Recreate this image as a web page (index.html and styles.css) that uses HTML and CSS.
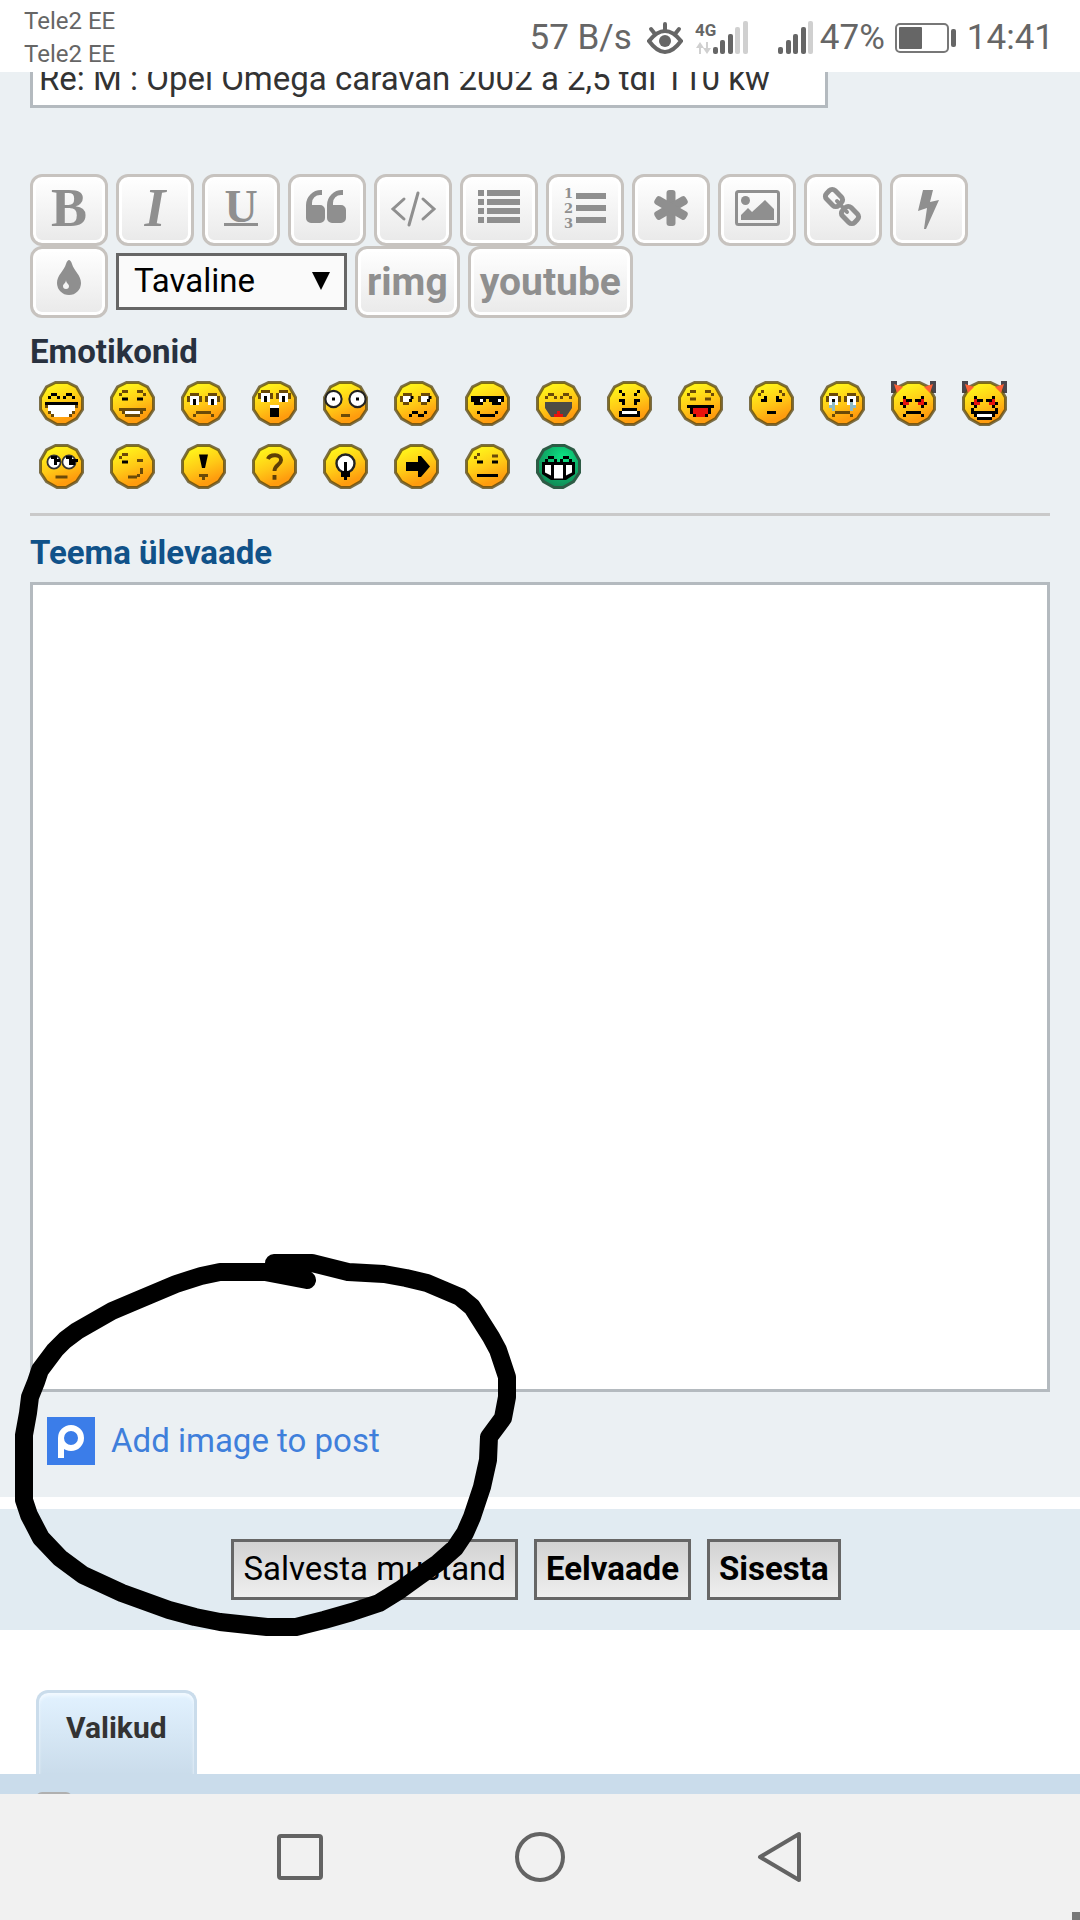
FILE: index.html
```
<!DOCTYPE html>
<html lang="et">
<head>
<meta charset="utf-8">
<meta name="viewport" content="width=device-width,initial-scale=1">
<title>Postita vastus</title>
<link rel="stylesheet" href="styles.css">
</head>
<body>

<!-- shared smiley parts, 15x15 grid -->
<svg class="defs" width="0" height="0" aria-hidden="true">
  <defs>
    <linearGradient id="gold" x1="0.3" y1="0" x2="0.7" y2="1"><stop offset="0.1" stop-color="#fff01a"/><stop offset="0.5" stop-color="#ffc816"/><stop offset="0.85" stop-color="#ff9c0e"/></linearGradient>
    <radialGradient id="mint" cx="0.6" cy="0.3" r="0.7"><stop offset="0" stop-color="#0be584"/><stop offset="1" stop-color="#108a56"/></radialGradient>
    <path id="shape" d="M5.5.5h4l3 1.5 2 3.5v4l-2 3-3.5 2h-3l-3.5-2-2-3v-4l2-3.5z"/>
    <g id="face"><use href="#shape" fill="url(#gold)" stroke="#54430f" stroke-opacity=".75"/></g>
    <path id="arches" d="M4 4.5h2M3 5.5h1M6 5.5h1M9 4.5h2M8 5.5h1M11 5.5h1"/>
    <path id="brows" d="M4 3.5h2M3 4.5h1M9 3.5h2M11 4.5h1"/>
    <path id="dots" d="M4 6h2M9 6h2"/>
    <path id="frown" d="M5 10.500h5M4 11.5h1M10 11.5h1"/>
    <g id="sadeyes"><path class="w" d="M3 5.5h3M3 6.5h3M3 7.5h3M9 5.5h3M9 6.5h3M9 7.5h3"/><path class="b" d="M3 4.5h3M9 4.5h3M2 5.5h1M2 6.5h1M6 5.5h1M6 6.5h1M8 5.5h1M8 6.5h1M12 5.5h1M12 6.5h1"/><path class="k" d="M4 6.5h1M4 7.5h1M10 6.5h1M10 7.5h1"/></g>
    <g id="devil"><path fill="#49454c" d="M0 0h2v4H0zM13 0h2v4h-2z"/><use href="#face"/><path fill="#ff6136" d="M1 1l3 1-2 2zM14 1l-3 1 2 2z"/><path class="r" d="M4 6.5h2M4 7.5h2M9 6.5h2M9 7.5h2"/><path class="k" d="M4 5.5h1M5 6.5h2M10 5.5h1M8 6.5h2M3 7.5h1M11 7.5h1M4 8.5h1M10 8.5h1"/></g>
  </defs>
</svg>

<header class="statusbar">
  <div class="carriers"><div>Tele2 EE</div><div>Tele2 EE</div></div>
  <div class="status">
    <span>57 B/s</span>
    <svg class="eye" width="36" height="36" viewBox="0 0 36 36" fill="none" stroke="#666" stroke-width="4"><path d="M2 21q16-20 32 0q-16 22-32 0z"/><path d="M18 4v6M4 9l4 5M32 9l-4 5" stroke-linecap="round"/><circle cx="18" cy="21" r="6" fill="#666" stroke="none"/></svg>
    <svg class="net" width="54" height="36" viewBox="0 0 54 36">
      <text x="0" y="16" font-size="17" font-weight="700" fill="#666">4G</text>
      <path d="M5 22l4 6H6v6H4v-6H1zM12 34l-4-6h3v-6h2v6h3z" fill="#d0d0d0"/>
      <g fill="#666"><rect x="18" y="27" width="5" height="7" rx="2"/><rect x="25" y="20" width="5" height="14" rx="2"/><rect x="33" y="14" width="5" height="20" rx="2"/></g>
      <g fill="#d0d0d0"><rect x="40" y="7" width="5" height="27" rx="2"/><rect x="48" y="1" width="5" height="33" rx="2"/></g>
    </svg>
    <svg class="net2" width="36" height="36" viewBox="0 0 36 36">
      <g fill="#666"><rect x="0" y="27" width="5" height="7" rx="2"/><rect x="8" y="20" width="5" height="14" rx="2"/><rect x="15" y="14" width="5" height="20" rx="2"/><rect x="23" y="7" width="5" height="27" rx="2"/></g>
      <rect x="30" y="1" width="5" height="33" rx="2" fill="#d0d0d0"/>
    </svg>
    <span class="percent">47%</span>
    <svg class="battery" width="62" height="36" viewBox="0 0 62 36"><rect x="1" y="4" width="52" height="28" rx="4" fill="none" stroke="#777" stroke-width="2"/><rect x="4" y="7" width="23" height="22" rx="1" fill="#666"/><rect x="56" y="9" width="5" height="18" rx="2" fill="#666"/></svg>
    <span>14:41</span>
  </div>
</header>

<main>
  <form>
    <div class="panel">
      <input class="subject" type="text" aria-label="Pealkiri" value="Re: M : Opel Omega caravan 2002 a 2,5 tdi 110 kw">

      <div class="toolbar">
        <button type="button" class="tool serif" aria-label="Paks">B</button>
        <button type="button" class="tool serif italic" aria-label="Kaldkiri">I</button>
        <button type="button" class="tool serif" aria-label="Allajoonitud"><span class="under">U</span></button>
        <button type="button" class="tool" aria-label="Tsitaat"><svg width="72" height="66"><path id="q" d="M31 13v5h-2a8 8 0 0 0-8 8v2h8a5 5 0 0 1 5 5v8a5 5 0 0 1-5 5h-9a5 5 0 0 1-5-5V28a15 15 0 0 1 15-15z"/><use href="#q" x="21"/></svg></button>
        <button type="button" class="tool" aria-label="Kood"><svg width="72" height="66" class="line"><path d="M27 22L16 32l11 10M46 22l11 10-11 10M41 16l-9 32"/></svg></button>
        <button type="button" class="tool" aria-label="Nimekiri"><svg width="72" height="66"><path d="M15 13h6v6h-6zM24 13h33v6H24zM15 22h6v6h-6zM24 22h33v6H24zM15 31h6v6h-6zM24 31h33v6H24zM15 40h6v6h-6zM24 40h33v6H24z"/></svg></button>
        <button type="button" class="tool" aria-label="Nummerdatud nimekiri"><svg width="72" height="66"><path d="M27 16h30v6H27zM27 28h30v6H27zM27 40h30v6H27z"/><g class="nums"><text x="15" y="21">1</text><text x="15" y="36">2</text><text x="15" y="51">3</text></g></svg></button>
        <button type="button" class="tool" aria-label="Nimekirja element"><svg width="72" height="66"><rect id="arm" x="31.5" y="13" width="9" height="36" rx="3"/><use href="#arm" transform="rotate(60 36 31)"/><use href="#arm" transform="rotate(120 36 31)"/></svg></button>
        <button type="button" class="tool" aria-label="Pilt"><svg width="72" height="66"><rect x="15.5" y="14.5" width="42" height="33" rx="2" fill="none" stroke="#8f8f8f" stroke-width="3"/><circle cx="24.5" cy="23.5" r="4.5"/><path d="M20 43v-5l7-7 4 4 13-12 9 9v11z"/></svg></button>
        <button type="button" class="tool" aria-label="Link"><svg width="72" height="66" fill="none" stroke="#8f8f8f" stroke-width="5"><rect x="18.5" y="15" width="17" height="12" rx="4" transform="rotate(45 27 21)"/><rect x="34.5" y="32" width="17" height="12" rx="4" transform="rotate(45 43 38)"/><path d="M30 24l10 11" stroke-width="4" stroke-linecap="round"/></svg></button>
        <button type="button" class="tool" aria-label="Flash"><svg width="72" height="66"><path d="M30 13h10l-3 12 9-2-13 29h-2l3-21-9 3z"/></svg></button>
        <button type="button" class="tool" aria-label="Värv"><svg width="72" height="66"><path d="M36 11c1 0 2 1 3 4 2 7 9 11 9 19a12 12 0 0 1-24 0c0-8 7-12 9-19 1-3 2-4 3-4z"/><path d="M33 31c0 3 3 4 3 6a3 3 0 0 1-6 0c0-2 3-3 3-6z" fill="#f4f4f4"/></svg></button>
        <span class="fontsize">
          <select aria-label="Teksti suurus"><option>Tavaline</option><option>Suur</option><option>Väike</option></select>
        </span>
        <button type="button" class="tool word">rimg</button>
        <button type="button" class="tool word">youtube</button>
      </div>

      <h2 class="smiley-title">Emotikonid</h2>
      <div class="smilies">
        <a href="#" aria-label="Väga rõõmus"><svg viewBox="0 0 15 15"><use href="#face"/><use href="#arches" class="k"/><path class="k" d="M2 7.5h11"/><path class="w" d="M3 8.5h9M3 9.5h9M4 10.5h7M5 11.5h5"/><path class="b" d="M2 8.5h1M12 8.5h1M3 10.5h1M11 10.5h1M4 11.5h1M10 11.5h1"/></svg></a>
        <a href="#" aria-label="Naeratus"><svg viewBox="0 0 15 15"><use href="#face"/><use href="#brows" class="b"/><use href="#dots" class="k"/><path class="b" d="M3 9.5h9M4 10.5h1M10 10.5h1M5 11.5h5"/><path class="w" d="M5 10.5h5"/></svg></a>
        <a href="#" aria-label="Kurb"><svg viewBox="0 0 15 15"><use href="#face"/><use href="#sadeyes"/><use href="#frown" class="b"/></svg></a>
        <a href="#" aria-label="Üllatunud"><svg viewBox="0 0 15 15"><use href="#face"/><use href="#sadeyes" y="-1"/><path class="w" d="M6 8.5h3"/><path class="k" d="M6 9.5h3M6 10.5h3M6 11.5h3"/></svg></a>
        <a href="#" aria-label="Šokis"><svg viewBox="0 0 15 15"><use href="#face"/><circle cx="3.5" cy="6" r="2.7" fill="#fff" stroke="#222" stroke-width=".7"/><circle cx="11.5" cy="6" r="2.7" fill="#fff" stroke="#222" stroke-width=".7"/><path class="k" d="M3 6h1M11 6h1"/><path class="b" d="M6 11.5h3"/></svg></a>
        <a href="#" aria-label="Segaduses"><svg viewBox="0 0 15 15"><use href="#face"/><path class="w" d="M3 5.5h3M3 6.5h3M9 5.5h3M9 6.5h3"/><path class="b" d="M3 4.5h3M9 4.5h3M2 5.5h1M2 6.5h1M8 5.5h1M8 6.5h1M3 7.5h2M9 7.5h2"/><path class="k" d="M5.5 5.5h1M5 6.5h1M11.5 5.5h1M11 6.5h1M5 11.5h1M6 10.5h2M8 11.5h2M10 10.5h1"/></svg></a>
        <a href="#" aria-label="Lahe"><svg viewBox="0 0 15 15"><use href="#face"/><path class="k" d="M2 5.5h11M2 6.5h5M8 6.5h5M3 7.5h3M9 7.5h3M5 11.5h5M4 10.5h1M10 10.5h1"/><path class="w" d="M5 6.5h1M11 6.5h1"/></svg></a>
        <a href="#" aria-label="Naerab"><svg viewBox="0 0 15 15"><use href="#face"/><use href="#arches" class="b"/><path d="M3 7h9v2l-2 3H5L3 9z" fill="#4c4b45"/><path class="r" d="M6 11.5h3M7 10.5h1"/></svg></a>
        <a href="#" aria-label="Vihane"><svg viewBox="0 0 15 15"><use href="#face"/><path class="k" d="M4 3.5h1M5 4.5h1M10 3.5h1M9 4.5h1M4 6.5h2M5 7.5h1M9 6.5h2M9 7.5h1M5 9.5h5M4 10.5h1M10 10.5h1M4 11.5h7"/><path class="w" d="M5 10.5h5"/></svg></a>
        <a href="#" aria-label="Keel väljas"><svg viewBox="0 0 15 15"><use href="#face"/><use href="#brows" class="b"/><use href="#dots" class="b"/><path class="k" d="M3 8.5h9M4 9.5h7M4 10.5h7M5 11.5h5"/><path class="r" d="M5 9.5h5M5 10.5h5M6 11.5h3"/></svg></a>
        <a href="#" aria-label="Piinlik"><svg viewBox="0 0 15 15"><use href="#face"/><path class="b" d="M4 3.5h1M3 4.5h1M10 3.5h1M11 4.5h1"/><path class="k" d="M4 6.5h2M5 5.5h1M9 6.5h2M9 5.5h1M6 10.5h3"/></svg></a>
        <a href="#" aria-label="Nutab"><svg viewBox="0 0 15 15"><use href="#face"/><use href="#sadeyes"/><path stroke="#8fb9c4" d="M4 7.5h1M3 8.5h2M4 9.5h1M10 7.5h1M10 8.5h2M10 9.5h1"/><use href="#frown" class="b"/></svg></a>
        <a href="#" aria-label="Kuri"><svg viewBox="0 0 15 15"><use href="#devil"/><use href="#frown" class="k"/></svg></a>
        <a href="#" aria-label="Kurikaval"><svg viewBox="0 0 15 15"><use href="#devil"/><path class="k" d="M3 9.5h1M11 9.5h1M3 10.5h9M4 11.5h7M5 12.5h5"/><path class="w" d="M5 11.5h5"/></svg></a>
        <a href="#" aria-label="Pööritab silmi"><svg viewBox="0 0 15 15"><use href="#face"/><circle cx="5" cy="6" r="2.2" fill="#fff" stroke="#333" stroke-width=".6"/><circle cx="10" cy="6" r="2.2" fill="#fff" stroke="#333" stroke-width=".6"/><path class="k" d="M4 4.5h2M5 5.5h2M5 6.5h1M9 4.5h2M10 5.5h3M10 6.5h2"/><path class="b" d="M5.5 11h4"/></svg></a>
        <a href="#" aria-label="Silmapilgutus"><svg viewBox="0 0 15 15"><use href="#face"/><path class="b" d="M4 3.5h2M3 4.5h1M9 5.5h2M6 11h3M9 10.5h1M10 9.5h1M10 8.5h1"/><path class="k" d="M4 6h2"/></svg></a>
        <a href="#" aria-label="Hüüumärk"><svg viewBox="0 0 15 15"><use href="#face"/><path fill="#000" d="M6 3.5h3L8 8H7z"/><path class="b" d="M6 10.5h3M7 11.5h1"/></svg></a>
        <a href="#" aria-label="Küsimus"><svg viewBox="0 0 15 15"><use href="#face"/><path fill="none" stroke="#5e3f06" stroke-width="1.3" d="M5.3 5C6 3.3 9.7 3.3 9.7 5.3C9.7 6.9 7.5 7 7.5 9M7.5 10.3v1.6"/></svg></a>
        <a href="#" aria-label="Idee"><svg viewBox="0 0 15 15"><use href="#face"/><circle cx="7.5" cy="6.5" r="3" fill="#fff" stroke="#222" stroke-width=".8"/><path class="k" d="M7 6.5h1M7 7.5h1M7 8.5h1M6 9.5h3M6 10.5h3M7 11.5h1"/></svg></a>
        <a href="#" aria-label="Nool"><svg viewBox="0 0 15 15"><use href="#face"/><path fill="#000" d="M4 6h4V4h1l3 3.5L9 11H8V9H4z"/></svg></a>
        <a href="#" aria-label="Neutraalne"><svg viewBox="0 0 15 15"><use href="#face"/><path class="b" d="M4 3.5h1M3 4.5h1M9 4h2"/><path class="k" d="M4 6h2M9 6h2M4 10.5h7"/></svg></a>
        <a href="#" aria-label="Roheline"><svg viewBox="0 0 15 15"><use href="#shape" fill="url(#mint)" stroke="#2d5b45"/><use href="#arches" class="k"/><path fill="#000" d="M2 6h11v4l-3 2H5l-3-2z"/><path fill="#fff" d="M3 7h2v3.5L3 9.5zM6 7h3v4.5H6zM10 7h2v2.5l-2 1z"/></svg></a>
      </div>

      <hr>

      <h2 class="review"><label for="message">Teema ülevaade</label></h2>
      <textarea id="message" class="message"></textarea>

      <a class="postimage" href="#">
        <svg width="48" height="48" viewBox="0 0 48 48"><rect width="48" height="48" fill="#3b7de9"/><g fill="none" stroke="#fff" stroke-width="6"><circle cx="24" cy="21" r="10"/><path d="M14 41V21"/></g></svg>
        <span>Add image to post</span>
      </a>
    </div>

    <div class="submit-panel">
      <button type="button" class="btn">Salvesta mustand</button>
      <button type="button" class="btn bold">Eelvaade</button>
      <button type="submit" class="btn bold">Sisesta</button>
    </div>

    <div class="tabs"><a href="#options">Valikud</a></div>
    <div class="options" id="options"><input type="checkbox" aria-label="Lülita BBCode välja"></div>
  </form>
</main>

<nav class="navbar">
  <button type="button" aria-label="Hiljutised"><svg width="52" height="52"><rect x="5" y="5" width="42" height="42" rx="2"/></svg></button>
  <button type="button" aria-label="Avaleht"><svg width="52" height="52"><circle cx="26" cy="26" r="23"/></svg></button>
  <button type="button" aria-label="Tagasi"><svg width="52" height="52"><path d="M45 3v46L6 26z"/></svg></button>
</nav>

<!-- marker drawn round the image link -->
<svg class="marker" width="510" height="390" viewBox="10 1250 510 390" aria-hidden="true">
  <path d="M307 1280L265 1272H220L201 1276 176 1284 138 1300 112 1311 77 1331 65 1340 55 1350 40 1370 36 1382 30 1397 28 1413 24 1435V1500L29 1515 41 1538 60 1558 83 1575 122 1593 169 1610 195 1617 220 1622 267 1627H296L324 1620 352 1612 379 1603 400 1590 418 1577 438 1563 455 1548 465 1533 472 1517 482 1487 488 1460 489 1437 503 1418 507 1397V1377L498 1350 491 1337 472 1307 460 1297 427 1283 406 1278 384 1274 348 1272 320 1265 312 1263H274"/>
</svg>
</body>
</html>
```

FILE: styles.css
```
*{box-sizing:border-box}
body{margin:0;position:relative;display:flex;flex-direction:column;height:100vh;overflow:hidden;background:#fff;color:#333;font-family:Roboto,Arial,sans-serif;font-size:33px}
button,input,select,textarea{font:inherit;color:inherit;margin:0;border-radius:0}
svg{display:block;flex:none}
a{text-decoration:none}
.defs{position:absolute}

.statusbar{flex:none;display:flex;justify-content:space-between;height:72px;padding:5px 26px 0 24px;color:#666}
.carriers{font-size:24px;line-height:33px}
.status{display:flex;align-items:center;font-size:35px;height:65px}
.eye{margin-left:15px}
.net{margin-left:12px}
.net2{margin-left:29px}
.percent{margin-left:6px}
.battery{margin:0 10px 0 10px}

main{flex:1;min-height:0;overflow:hidden}
.panel{background:#ebf0f3;padding:0 30px 32px}
.subject{display:block;width:798px;height:60px;margin-top:-24px;padding:0 6px;border:3px solid #b4babf;background:#fff;color:#333}

.toolbar{display:flex;flex-wrap:wrap;align-items:center;column-gap:8px;padding-top:66px}
.tool{display:flex;align-items:center;justify-content:center;min-width:78px;height:72px;padding:0;border:3px solid #c7c3bf;border-radius:12px;background:linear-gradient(#fff,#e9e9e9);box-shadow:inset 0 0 0 3px #fff;color:#8f8f8f;fill:#8f8f8f}
.tool .line{fill:none;stroke:#8f8f8f;stroke-width:3;stroke-linecap:round}
.serif{font:bold 54px/60px "Liberation Serif",serif;padding-bottom:4px}
.italic{font-style:italic}
.under{font-size:46px;line-height:32px;border-bottom:3px solid #8f8f8f}
.nums{font:bold 13px "DejaVu Serif",serif}
.word{padding:0 9px;font-size:39px;font-weight:700}
.fontsize{position:relative}
.fontsize select{display:block;width:231px;height:57px;margin-bottom:2px;padding:0 15px 2px;appearance:none;border:3px solid #666;background:#fafafa;color:#000}
.fontsize::after{content:"";position:absolute;right:17px;top:19px;border:9px solid transparent;border-top:18px solid #000;border-bottom:0;pointer-events:none}

h2{margin:0;font-size:33px;line-height:40px}
.smiley-title{margin-top:14px;color:#28313f}
.smilies{display:flex;flex-wrap:wrap;gap:18px 26px;padding:9px 0 0 9px}
.smilies svg{width:45px;height:45px}
.k,.b,.w,.r{fill:none;stroke:#000}
.b{stroke:#6b4a08}
.w{stroke:#fff}
.r{stroke:#e8120c}
hr{height:3px;margin:24px 0 0;border:0;background:#c9c9c9}
.review{margin-top:17px;color:#105289}
.message{display:block;width:100%;height:810px;margin-top:9px;border:3px solid #b4babf;background:#fff;resize:none}
.postimage{display:inline-flex;align-items:center;gap:16px;margin:25px 0 0 17px;color:#3f7fdb;vertical-align:top}
.postimage span{padding-bottom:2px}

.submit-panel{display:flex;justify-content:center;gap:16px;margin-top:12px;padding:30px 8px 30px 0;background:#e1ebf2}
.btn{height:61px;padding:0 9px 2px;border:3px solid #666;background:linear-gradient(#d2d2d2,#efefef);color:#000}
.bold{font-weight:700}

.tabs{display:flex;margin-top:60px;padding-left:36px}
.tabs a{height:84px;padding:17px 27px 0;border:3px solid #cadceb;border-bottom:0;border-radius:12px 12px 0 0;background:linear-gradient(#e2f2ff,#cadceb);box-shadow:inset 0 3px 3px #f2f9ff;color:#333;font-size:30px;font-weight:700;line-height:36px}
.options{padding:18px 36px;background:#cadceb}
.options input{display:block;appearance:none;width:36px;height:36px;border:3px solid #b0b0b0;border-radius:6px;background:#fff}

.navbar{position:relative;flex:none;display:flex;align-items:center;justify-content:center;gap:188px;height:126px;background:#f1f1f1}
.navbar button{padding:0;border:0;background:none}
.navbar svg{fill:none;stroke:#636363;stroke-width:4;stroke-linejoin:round}
.navbar::after{content:"";position:absolute;right:0;bottom:0;width:8px;height:8px;background:#777}

.marker{position:absolute;left:10px;top:1250px;fill:none;stroke:#000;stroke-width:18;stroke-linecap:round;stroke-linejoin:round;pointer-events:none}
```
